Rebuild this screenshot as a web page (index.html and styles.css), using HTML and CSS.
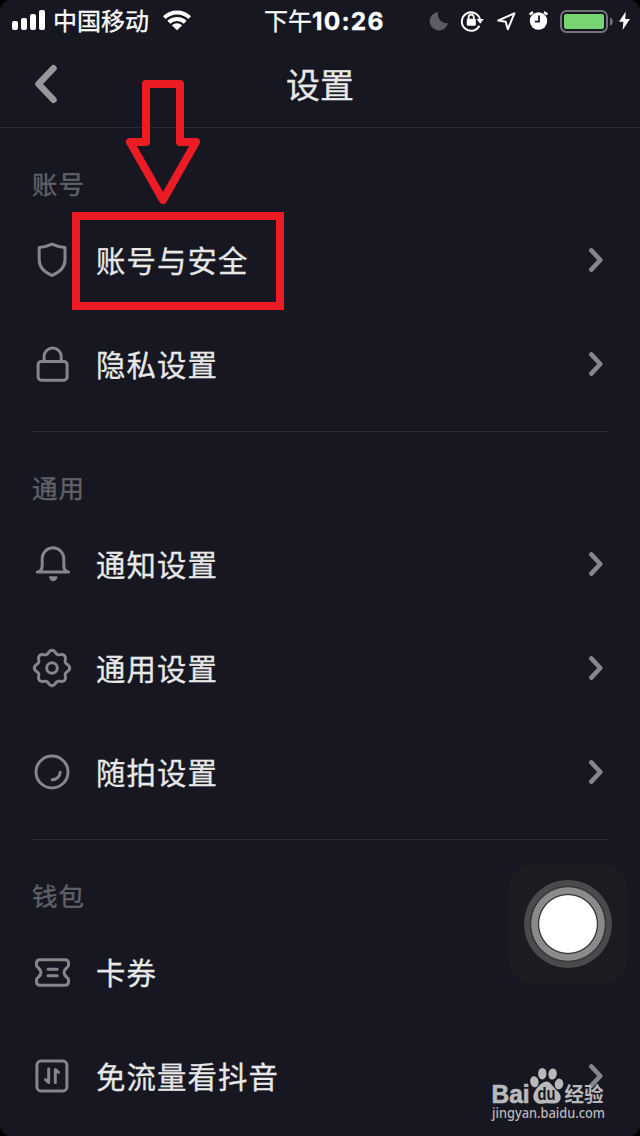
FILE: index.html
```html
<!DOCTYPE html>
<html lang="zh-CN">
<head>
<meta charset="utf-8">
<title>设置</title>
<link rel="stylesheet" href="styles.css">
</head>
<body>
<svg class="defs" width="0" height="0" aria-hidden="true">
  <symbol id="chevron" viewBox="0 0 16 26"><path d="M3.3 3.4 L12.3 13 L3.3 22.6"/></symbol>
</svg>
<div class="screen">
  <header class="status">
    <div class="status-left">
      <svg class="signal" width="34" height="22" viewBox="0 0 34 22"><rect x="0" y="11" width="6" height="9" rx="2"/><rect x="9" y="8" width="6" height="12" rx="2"/><rect x="18" y="4" width="6" height="16" rx="2"/><rect x="27" y="0" width="6" height="20" rx="2"/></svg>
      <span class="carrier">中国移动</span>
      <svg class="wifi" width="30" height="22" viewBox="0 0 30 22"><path d="M2.3 7.6 A18.3 18.3 0 0 1 27.7 7.6 M6.8 12.3 A12 12 0 0 1 23.2 12.3"/><path class="solid" d="M15 20.2 L9.8 15.2 Q15 11.4 20.2 15.2 Z"/></svg>
    </div>
    <div class="time">下午<b>10:26</b></div>
    <svg class="status-icons" width="220" height="40" viewBox="420 0.5 220 40">
      <path class="moon" d="M438 11.4 A9.3 9.3 0 1 0 448 22.8 A9.4 9.4 0 0 1 438 11.4 Z"/>
      <path class="line" d="M479.3 25.2 A9.2 9.2 0 1 1 480 19"/>
      <path class="fill" d="M476.5 18.6 H483.8 L480.2 23.2 Z"/>
      <rect class="fill" x="466.8" y="18.2" width="9" height="7" rx="1"/>
      <path class="shackle" d="M468.6 18.5 V16.7 A2.6 2.6 0 0 1 473.8 16.7 V18.5"/>
      <path class="nav" d="M514.4 12.8 L498.3 20 L505.7 21.3 L507.8 28.8 Z"/>
      <circle class="fill" cx="538.5" cy="20.5" r="8.7"/>
      <path class="ears" d="M529.8 14.2 A12 12 0 0 1 533 11.7 M547.2 14.2 A12 12 0 0 0 544 11.7"/>
      <path class="hands" d="M539 15 V21.2 H534.8"/>
      <rect class="battery" x="561" y="10.5" width="46" height="21" rx="5.5"/>
      <rect class="charge" x="564" y="13.5" width="40" height="15" rx="2"/>
      <path class="cap" d="M610 17 Q612.8 18 612.8 21 T610 25 Z"/>
      <path class="fill" d="M625.8 11 L619 21.3 H623.4 L622.6 29.6 L630 18.5 H625.2 Z"/>
    </svg>
  </header>

  <nav class="titlebar">
    <svg class="back" width="28" height="42" viewBox="0 0 28 42"><path d="M21.5 5.3 L6.5 21 L21.5 36.7"/></svg>
    <h1>设置</h1>
  </nav>

  <main>
    <section>
      <h2>账号</h2>
      <div class="row">
        <svg class="icon" viewBox="0 0 40 40"><path d="M20 4.1 Q27 7.3 33 7.5 V20 C33 28.5 27 32.5 20 35.5 C13 32.5 7.2 28.5 7.2 20 V7.5 Q13 7.3 20 4.1 Z"/></svg>
        <span>账号与安全</span><svg class="go"><use href="#chevron"/></svg>
      </div>
      <div class="row">
        <svg class="icon" viewBox="0 0 40 40"><rect x="6.1" y="17.4" width="29" height="18.8" rx="3.2"/><path d="M12.1 17 V12.5 A8.5 8.5 0 0 1 29.2 12.5 V17"/></svg>
        <span>隐私设置</span><svg class="go"><use href="#chevron"/></svg>
      </div>
    </section>
    <section>
      <h2>通用</h2>
      <div class="row">
        <svg class="icon" viewBox="0 0 40 40"><path d="M5.2 28.1 H36.6 M7 27.8 Q10.2 25.5 10.2 22 V14.6 A10.8 10.8 0 0 1 31.8 14.6 V22 Q31.8 25.5 35 27.8"/><path class="solid" d="M17.2 32.3 H25.3 C25.8 34.5 23.8 37.2 21.2 37.2 C18.6 37.2 16.7 34.5 17.2 32.3 Z"/></svg>
        <span>通知设置</span><svg class="go"><use href="#chevron"/></svg>
      </div>
      <div class="row">
        <svg class="icon" viewBox="-20 -20 40 40">
          <g id="teeth"><path id="tooth" d="M17.7 0 C17.7 3.4 14.1 3.5 13.3 5.5 C12.5 7.5 14.9 10.1 12.5 12.5"/><use href="#tooth" transform="rotate(45)"/><use href="#tooth" transform="rotate(90)"/><use href="#tooth" transform="rotate(135)"/></g>
          <use href="#teeth" transform="rotate(180)"/><circle r="5.3"/>
        </svg>
        <span>通用设置</span><svg class="go"><use href="#chevron"/></svg>
      </div>
      <div class="row">
        <svg class="icon" viewBox="0 0 40 40"><circle cx="20" cy="20" r="16"/><path d="M28.2 20.2 A8 8 0 0 1 20.2 27.8"/></svg>
        <span>随拍设置</span><svg class="go"><use href="#chevron"/></svg>
      </div>
    </section>
    <section>
      <h2>钱包</h2>
      <div class="row">
        <svg class="icon" viewBox="0 0 40 40"><path d="M8 7.8 H33 Q36.5 7.8 36.5 11.3 V13.2 Q36.5 14.8 35 15.5 Q29 20.5 35 25.5 Q36.5 26.2 36.5 27.8 V29.7 Q36.5 33.2 33 33.2 H8 Q4.5 33.2 4.5 29.7 V27.8 Q4.5 26.2 6 25.5 Q12 20.5 6 15.5 Q4.5 14.8 4.5 13.2 V11.3 Q4.5 7.8 8 7.8 Z M16 17.3 H25.2 M16 23.7 H25.2"/></svg>
        <span>卡券</span>
      </div>
      <div class="row">
        <svg class="icon" viewBox="0 0 40 40"><rect x="4.9" y="5.1" width="30" height="29.8" rx="4"/><path d="M16.7 12.8 V26.5 L13.5 23.7 M23.3 26.5 V13.5 L26.5 16.3"/></svg>
        <span>免流量看抖音</span><svg class="go"><use href="#chevron"/></svg>
      </div>
    </section>
  </main>

  <svg class="arrow" width="80" height="130" viewBox="122 78 80 130"><path d="M146 142 V84 H180 V142 H196 L163 200 L130 142 Z"/></svg>
  <div class="highlight"></div>
  <div class="assist"><i></i></div>
  <svg class="watermark" width="128" height="66" viewBox="484 1062 128 66">
    <text class="bai" x="491.5" y="1102.5" textLength="38" lengthAdjust="spacingAndGlyphs">Bai</text>
    <ellipse cx="534.4" cy="1081.7" rx="4.2" ry="5.6" transform="rotate(-12 534.4 1081.7)"/>
    <ellipse cx="542.3" cy="1073.7" rx="4.2" ry="5.8"/>
    <ellipse cx="552.6" cy="1074" rx="4.2" ry="5.6" transform="rotate(10 552.6 1074)"/>
    <ellipse cx="559" cy="1084" rx="4.3" ry="5.4" transform="rotate(10 559 1084)"/>
    <path d="M546.5 1081.5 C551 1081.5 552.5 1087 557 1090.5 C563.5 1096 561 1103.5 554 1103.5 C550 1103.5 547 1102.8 544 1103.5 C537 1105 532.5 1101 533.5 1095 C534.5 1090 541 1081.5 546.5 1081.5 Z"/>
    <text class="du" x="537.5" y="1100.3" textLength="18" lengthAdjust="spacingAndGlyphs">du</text>
    <text class="jy" x="564.5" y="1101.5" textLength="39" lengthAdjust="spacingAndGlyphs">经验</text>
    <text class="url" x="492" y="1118" textLength="113" lengthAdjust="spacingAndGlyphs">jingyan.baidu.com</text>
  </svg>
</div>
</body>
</html>
```

FILE: styles.css
```css
* { box-sizing: border-box; }
body { margin: 0; background: #000; font-family: "Noto Sans CJK SC", sans-serif; }
svg { fill: none; flex: none; }
.defs { position: absolute; }
.screen {
  position: relative;
  width: 640px;
  height: 1136px;
  overflow: hidden;
  border-radius: 11px;
  background: #171721;
  color: #e8e8e8;
}

.status {
  display: grid;
  grid-template-columns: 220px 200px 220px;
  align-items: center;
  height: 40px;
  color: #fff;
}
.status-left { display: flex; align-items: center; padding-left: 12px; }
.signal { fill: #fff; }
.carrier { margin: 0 13px 0 7px; padding-bottom: 2px; font-size: 24px; line-height: 38px; -webkit-text-stroke: .3px; }
.wifi { stroke: #fff; stroke-width: 4; }
.wifi .solid { fill: #fff; stroke: none; }
.time { padding: 0 0 1px 44px; font-size: 24px; line-height: 39px; white-space: nowrap; -webkit-text-stroke: .3px; }
.time b { font-family: Inter, sans-serif; font-size: 24.5px; font-weight: 700; letter-spacing: 1.2px; }
.fill { fill: #fff; }
.moon { fill: #5c5d66; }
.line { stroke: #fff; stroke-width: 2; }
.shackle { stroke: #fff; stroke-width: 1.8; }
.nav { stroke: #fff; stroke-width: 2; stroke-linejoin: round; }
.ears { stroke: #fff; stroke-width: 2.6; }
.hands { stroke: #171721; stroke-width: 1.8; }
.battery { stroke: #73737a; stroke-width: 2; }
.charge { fill: #77d672; }
.cap { fill: #73737a; }

.titlebar {
  display: grid;
  grid-template-columns: 96px 1fr 96px;
  align-items: center;
  height: 88px;
  border-bottom: 1px solid #2a2a35;
}
.back { margin-left: 32px; stroke: #97979b; stroke-width: 6.5; stroke-linecap: round; stroke-linejoin: round; }
h1 { margin: 0; font-size: 34px; font-weight: 400; line-height: 50px; text-align: center; -webkit-text-stroke: .3px; }

section { margin: 0 32px; }
section + section { margin-top: 15px; border-top: 1px solid #2a2a33; }
h2 {
  height: 80px;
  margin: 0;
  padding-top: 31px;
  color: #606168;
  font-size: 25.5px;
  font-weight: 400;
  line-height: 48px;
  letter-spacing: 1px;
  -webkit-text-stroke: .4px;
}
.row { display: flex; align-items: center; height: 104px; }
.row span { flex: 1; margin-left: 24px; padding-bottom: 2px; font-size: 29.4px; line-height: 44px; letter-spacing: 1.1px; -webkit-text-stroke: .3px; }
.icon { width: 40px; height: 40px; stroke: #85858a; stroke-width: 3; stroke-linecap: round; stroke-linejoin: round; }
.icon .solid { fill: #85858a; stroke: none; }
.go { width: 16px; height: 26px; margin-right: 4px; stroke: #85858a; stroke-width: 4.6; stroke-linecap: round; stroke-linejoin: round; }

.arrow { position: absolute; left: 122px; top: 78px; stroke: #ed1c24; stroke-width: 8; stroke-linejoin: round; }
.highlight { position: absolute; left: 72px; top: 212px; width: 212px; height: 98px; border: 8px solid #ed1c24; }
.assist {
  position: absolute;
  left: 508px;
  top: 864px;
  display: grid;
  place-items: center;
  width: 120px;
  height: 120px;
  border-radius: 24px;
  background: #1b1c1f;
}
.assist i {
  width: 88px;
  height: 88px;
  border-radius: 50%;
  background: radial-gradient(circle closest-side, #fff 28.3px, #39393c 29.2px, #39393c 29.6px, #8b8b8d 30.6px, #8b8b8d 36.3px, #343437 37.1px, #343437 37.6px, #4a4a4d 38.5px);
}
.watermark { position: absolute; left: 484px; top: 1062px; fill: #b9b9bb; }
.bai { font: 700 25.5px "Liberation Sans", sans-serif; stroke: #b9b9bb; stroke-width: .7px; }
.du { fill: #171721; font: 700 18px "Liberation Sans", sans-serif; }
.jy { font: 700 20px "Noto Sans CJK SC", sans-serif; }
.url { font: 500 14px "Noto Sans", sans-serif; }
```
